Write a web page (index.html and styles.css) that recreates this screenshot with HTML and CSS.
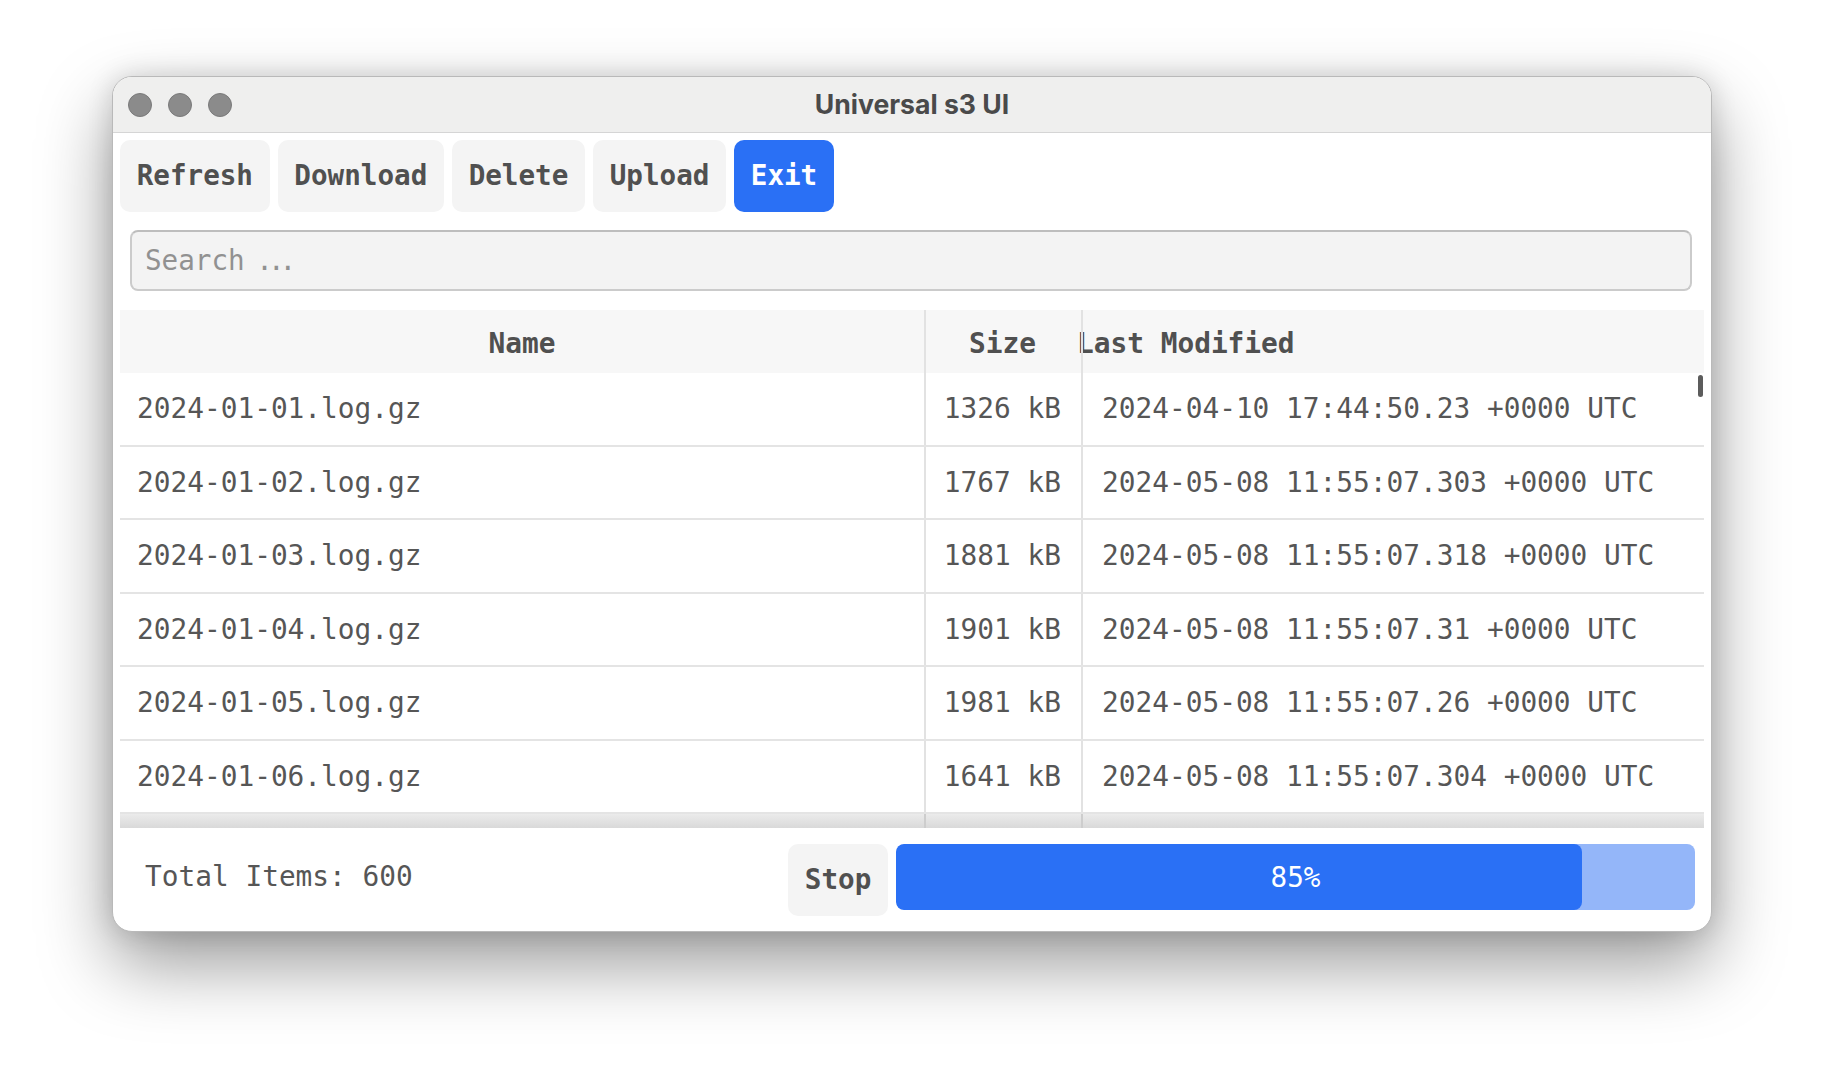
FILE: index.html
```html
<!DOCTYPE html>
<html>
<head>
<meta charset="utf-8">
<title>Universal s3 UI</title>
<link rel="stylesheet" href="styles.css">
</head>
<body>
<div class="window">
  <div class="titlebar">
    <div class="lights">
      <span class="light"></span><span class="light"></span><span class="light"></span>
    </div>
    <div class="title">Universal s3 UI</div>
    <div></div>
  </div>
  <div class="content">
    <div class="toolbar">
      <button class="btn">Refresh</button>
      <button class="btn">Download</button>
      <button class="btn">Delete</button>
      <button class="btn">Upload</button>
      <button class="btn primary">Exit</button>
    </div>
    <div class="search"><span class="placeholder">Search<span class="dots"> ...</span></span></div>
    <div class="table">
      <div class="row head">
        <div class="cell c1">Name</div>
        <div class="cell c2">Size</div>
        <div class="cell c3"><span class="lm">Last Modified</span></div>
      </div>
      <div class="body">
        <div class="row"><div class="cell c1">2024-01-01.log.gz</div><div class="cell c2">1326 kB</div><div class="cell c3">2024-04-10 17:44:50.23 +0000 UTC</div></div>
        <div class="row"><div class="cell c1">2024-01-02.log.gz</div><div class="cell c2">1767 kB</div><div class="cell c3">2024-05-08 11:55:07.303 +0000 UTC</div></div>
        <div class="row"><div class="cell c1">2024-01-03.log.gz</div><div class="cell c2">1881 kB</div><div class="cell c3">2024-05-08 11:55:07.318 +0000 UTC</div></div>
        <div class="row"><div class="cell c1">2024-01-04.log.gz</div><div class="cell c2">1901 kB</div><div class="cell c3">2024-05-08 11:55:07.31 +0000 UTC</div></div>
        <div class="row"><div class="cell c1">2024-01-05.log.gz</div><div class="cell c2">1981 kB</div><div class="cell c3">2024-05-08 11:55:07.26 +0000 UTC</div></div>
        <div class="row"><div class="cell c1">2024-01-06.log.gz</div><div class="cell c2">1641 kB</div><div class="cell c3">2024-05-08 11:55:07.304 +0000 UTC</div></div>
        <div class="row strip"><div class="cell c1"></div><div class="cell c2"></div><div class="cell c3"></div></div>
        <div class="vthumb"></div>
      </div>
    </div>
    <div class="footer">
      <div class="total">Total Items: 600</div>
      <button class="btn stop">Stop</button>
      <div class="progress">
        <div class="fill" style="width:85%"></div>
        <div class="pct">85%</div>
      </div>
    </div>
  </div>
</div>
</body>
</html>
```

FILE: styles.css
```css
* { box-sizing: border-box; }

html, body {
  margin: 0;
  padding: 0;
  background: #ffffff;
  min-height: 1080px;
}

body {
  padding-top: 76px;
  padding-left: 112px;
  font-family: "DejaVu Sans Mono", "Liberation Mono", monospace;
}

.window {
  width: 1600px;
  height: 856px;
  background: #ffffff;
  border: 1px solid #b9b9b9;
  border-radius: 20px;
  overflow: hidden;
  box-shadow: 0 32px 72px rgba(0, 0, 0, 0.4), 0 0 26px rgba(0, 0, 0, 0.14);
}

.titlebar {
  height: 56px;
  background: #efefee;
  border-bottom: 1px solid #d5d5d5;
  display: grid;
  grid-template-columns: 1fr auto 1fr;
  align-items: center;
}

.lights {
  display: flex;
  gap: 16px;
  padding-left: 15px;
}

.light {
  width: 24px;
  height: 24px;
  border-radius: 50%;
  background: #8b8b8b;
  border: 1px solid #7a7a7a;
}

.title {
  font-family: "Inter", "Roboto", sans-serif;
  font-weight: 700;
  font-size: 26.6px;
  color: #4a4a4a;
  padding-bottom: 1px;
}

.content {
  padding: 7px 7px 0 7px;
}

.toolbar {
  display: flex;
  gap: 8px;
}

.btn {
  font-family: "DejaVu Sans Mono", "Liberation Mono", monospace;
  font-size: 27.6px;
  font-weight: 700;
  color: #505050;
  background: #f4f4f4;
  border: none;
  border-radius: 10px;
  height: 72px;
  padding: 0 16.7px;
  line-height: 72px;
  margin: 0;
}

.btn.primary {
  background: #2a70f5;
  color: #ffffff;
}

.search {
  margin: 18px 12px 0 10px;
  height: 61px;
  background: #f3f3f3;
  border: 2px solid #cbcbcb;
  border-top-color: #bdbdbd;
  border-radius: 8px;
  display: flex;
  align-items: center;
  padding-left: 13px;
}

.placeholder {
  font-size: 27.6px;
  color: #919191;
  white-space: pre;
}

.dots {
  letter-spacing: -5px;
}

.table {
  margin-top: 19px;
}

.row {
  display: grid;
  grid-template-columns: 804px 157px 1fr;
  height: 73.5px;
  border-bottom: 2px solid #e4e4e4;
  font-size: 27.8px;
  color: #565656;
}

.row.head {
  height: 63px;
  background: #f7f7f7;
  border-bottom: none;
  font-weight: 700;
  color: #505050;
  padding-top: 3px;
}

.cell {
  position: relative;
  display: flex;
  align-items: center;
  white-space: nowrap;
}

.row.head .cell {
  margin-top: -3px;
  padding-top: 3px;
}

.cell.c2::before,
.cell.c3::before {
  content: "";
  position: absolute;
  left: 0;
  top: 0;
  bottom: 0;
  width: 2px;
  background: #e2e2e2;
}

.row .c1 { padding-left: 17px; }
.row .c2 { justify-content: flex-end; padding-right: 20px; }
.row .c3 { padding-left: 21px; }

.row.head .c1 { justify-content: center; padding-left: 0; }
.row.head .c2 { justify-content: center; padding-right: 0; }
.row.head .c3 { padding-left: 0; }

.lm { margin-left: -4px; }

.body {
  position: relative;
}

.row.strip {
  height: 14px;
  border-bottom: none;
  background: linear-gradient(#ebebeb, #d9d9d9);
}

.row.strip .c2::before,
.row.strip .c3::before {
  background: #cdcdcd;
}

.vthumb {
  position: absolute;
  right: 1px;
  top: 2px;
  width: 5px;
  height: 22px;
  border-radius: 3px;
  background: #5c5c5c;
}

.footer {
  margin-top: 16px;
  display: flex;
  align-items: flex-start;
}

.total {
  padding-left: 25px;
  font-size: 27.8px;
  color: #565656;
  line-height: 66px;
}

.btn.stop {
  margin-left: auto;
}

.progress {
  position: relative;
  width: 799px;
  height: 66px;
  margin-left: 8px;
  margin-right: 9px;
  background: #94b6f9;
  border-radius: 8px;
  overflow: hidden;
}

.fill {
  box-sizing: content-box;
  height: 100%;
  padding-right: 7px;
  background: #2a70f5;
  border-radius: 8px;
}

.pct {
  position: absolute;
  inset: 0;
  display: flex;
  align-items: center;
  justify-content: center;
  font-size: 27.6px;
  color: #ffffff;
}
```
